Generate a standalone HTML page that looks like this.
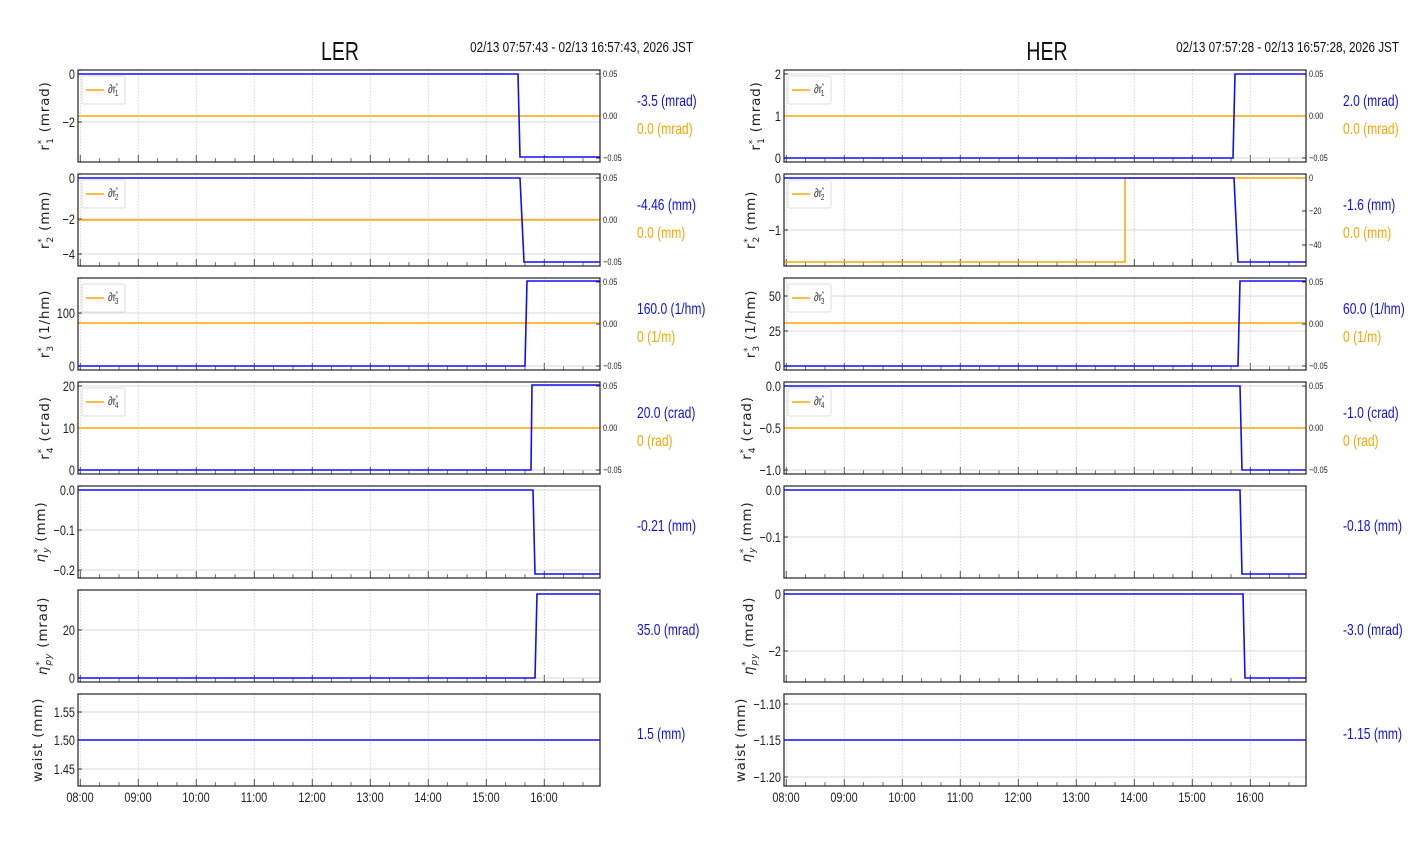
<!DOCTYPE html>
<html><head><meta charset="utf-8"><style>
html,body{margin:0;padding:0;background:#fff;width:1412px;height:864px;overflow:hidden}
svg text{font-family:"Liberation Sans",sans-serif}
</style></head><body>
<svg id="s" width="1412" height="864" xmlns="http://www.w3.org/2000/svg"></svg>
<script>
const S=document.getElementById('s');let h='';
const B='#1010ee',O='#ffa500';
function txt(x,y,t,o){o=o||{};const k=o.k||0.78;h+=`<text x="0" y="0" font-size="${o.fs||11}" fill="${o.c||'#222'}" text-anchor="${o.a||'start'}" transform="translate(${x} ${y}) scale(${k} 1)">${t}</text>`;}
function panel(x0,x1,top,p){
 const bot=top+92;
 for(let i=0;i<9;i++){const x=x0+2.3+58*i;h+=`<line x1="${x}" y1="${top}" x2="${x}" y2="${bot}" stroke="#ccc" stroke-dasharray="1.5,1.5" stroke-width="0.8"/>`;}
 for(let i=-1;i<28;i++){const x=x0+2.3+58/3*i;if(x<x0||x>x1)continue;const maj=i%3==0;h+=`<line x1="${x}" y1="${bot}" x2="${x}" y2="${bot-(maj?7:4)}" stroke="#555" stroke-width="${maj?1:0.8}"/>`;}
 p.yt.forEach(([v,y])=>{h+=`<line x1="${x0}" y1="${y}" x2="${x1}" y2="${y}" stroke="#ccc" stroke-width="0.8"/><line x1="${x0}" y1="${y}" x2="${x0+4}" y2="${y}" stroke="#333"/>`;txt(x0-3,y+5,v,{a:'end',fs:14});});
 if(p.rt){p.rt.forEach(([v,y])=>{h+=`<line x1="${x1-4}" y1="${y}" x2="${x1}" y2="${y}" stroke="#333"/>`;txt(x1+3,y+3,v,{fs:9.5});});}
 if(p.or)h+=`<polyline points="${p.or}" fill="none" stroke="${O}" stroke-width="1.5"/>`;
 h+=`<polyline points="${p.bl}" fill="none" stroke="${B}" stroke-width="1.6"/>`;
 h+=`<rect x="${x0}" y="${top}" width="${x1-x0}" height="92" fill="none" stroke="#222" stroke-width="1.2"/>`;
 if(p.leg){h+=`<rect x="${x0+4}" y="${top+6}" width="43" height="28" rx="2" fill="#fff" stroke="#ddd"/><line x1="${x0+8}" y1="${top+20}" x2="${x0+26}" y2="${top+20}" stroke="${O}" stroke-width="1.5"/>`;
  h+=`<text x="0" y="0" font-size="12" fill="#333" transform="translate(${x0+30} ${top+23}) scale(0.8 1)">∂r<tspan font-size="7" dy="-5">*</tspan><tspan font-size="8" dx="-4" dy="8">${p.leg}</tspan></text>`;}
 const lx=x0-(p.lo||29),ly=top+46;
 h+=`<text x="${lx}" y="${ly}" font-size="13.5" fill="#222" text-anchor="middle" letter-spacing="0.8" transform="rotate(-90 ${lx} ${ly})" style="font-family:'DejaVu Sans',sans-serif">${p.yl}</text>`;
 p.vt.forEach(([t,c,dy])=>txt(x1+37,top+dy,t,{c:c,fs:15.5}));
}
function yl(n,u){return `r<tspan font-size="9" dy="-5">*</tspan><tspan font-size="9" dx="-5" dy="9">${n}</tspan><tspan dy="-4"> (${u})</tspan>`;}
function eta(sub,u){return `<tspan font-style="italic">η</tspan><tspan font-size="9" dy="-5">*</tspan><tspan font-size="9" font-style="italic" dx="-5" dy="9">${sub}</tspan><tspan dy="-4"> (${u})</tspan>`;}
const rt=[['0.05',74],['0.00',116],['−0.05',158]];
function rtt(off){return rt.map(([v,y])=>[v,y+off]);}
const tops=[70,174,278,382,486,590,694];
const L=[78,600];
const LP=[
 {yt:[['0',74],['−2',122]],rt:rtt(0),or:`78,116 600,116`,bl:`78,74 518,74 520,157 600,157`,leg:'1',yl:yl(1,'mrad'),vt:[['-3.5 (mrad)',B,36],['0.0 (mrad)',O,64]]},
 {yt:[['0',178],['−2',219],['−4',254]],rt:rtt(104),or:`78,220 600,220`,bl:`78,178 520,178 524,262 600,262`,leg:'2',yl:yl(2,'mm'),vt:[['-4.46 (mm)',B,36],['0.0 (mm)',O,64]]},
 {yt:[['0',366],['100',313]],rt:rtt(208),or:`78,323 600,323`,bl:`78,366 525,366 527,281 600,281`,leg:'3',yl:yl(3,'1/hm'),vt:[['160.0 (1/hm)',B,36],['0 (1/m)',O,64]]},
 {yt:[['0',470],['10',428],['20',386]],rt:rtt(312),or:`78,428 600,428`,bl:`78,470 531,470 532,385 600,385`,leg:'4',yl:yl(4,'crad'),vt:[['20.0 (crad)',B,36],['0 (rad)',O,64]]},
 {yt:[['0.0',490],['−0.1',530],['−0.2',570]],bl:`78,490 533,490 535,574 600,574`,yl:eta('y','mm'),lo:33,vt:[['-0.21 (mm)',B,45]]},
 {yt:[['0',678],['20',630]],bl:`78,678 535,678 537,594 600,594`,yl:eta('py','mrad'),lo:31,vt:[['35.0 (mrad)',B,45]]},
 {yt:[['1.55',712],['1.50',740],['1.45',769]],bl:`78,740 600,740`,yl:'waist (mm)',lo:36,vt:[['1.5 (mm)',B,45]]},
];
const H=[784,1306];
const HP=[
 {yt:[['2',74],['1',116],['0',158]],rt:rtt(0),or:`784,116 1306,116`,bl:`784,158 1233,158 1235,74 1306,74`,leg:'1',yl:yl(1,'mrad'),lo:24,vt:[['2.0 (mrad)',B,36],['0.0 (mrad)',O,64]]},
 {yt:[['0',178],['−1',230]],rt:[['0',178],['−20',211],['−40',245]],or:`784,262 1125,262 1125,178 1306,178`,bl:`784,178 1234,178 1238,262 1306,262`,leg:'2',yl:yl(2,'mm'),vt:[['-1.6 (mm)',B,36],['0.0 (mm)',O,64]]},
 {yt:[['50',296],['25',331],['0',366]],rt:rtt(208),or:`784,323 1306,323`,bl:`784,366 1238,366 1240,281 1306,281`,leg:'3',yl:yl(3,'1/hm'),vt:[['60.0 (1/hm)',B,36],['0 (1/m)',O,64]]},
 {yt:[['0.0',386],['−0.5',428],['−1.0',470]],rt:rtt(312),or:`784,428 1306,428`,bl:`784,386 1240,386 1242,470 1306,470`,leg:'4',yl:yl(4,'crad'),lo:33,vt:[['-1.0 (crad)',B,36],['0 (rad)',O,64]]},
 {yt:[['0.0',490],['−0.1',537]],bl:`784,490 1240,490 1242,574 1306,574`,yl:eta('y','mm'),lo:33,vt:[['-0.18 (mm)',B,45]]},
 {yt:[['0',594],['−2',651]],bl:`784,594 1243,594 1245,678 1306,678`,yl:eta('py','mrad'),lo:31,vt:[['-3.0 (mrad)',B,45]]},
 {yt:[['−1.10',704],['−1.15',740],['−1.20',777]],bl:`784,740 1306,740`,yl:'waist (mm)',lo:39,vt:[['-1.15 (mm)',B,45]]},
];
LP.forEach((p,i)=>panel(L[0],L[1],tops[i],p));
HP.forEach((p,i)=>panel(H[0],H[1],tops[i],p));
for(let i=0;i<9;i++){const t=String(8+i).padStart(2,'0')+':00';txt(80+58*i,802,t,{a:'middle',fs:14});txt(786+58*i,802,t,{a:'middle',fs:14});}
txt(340,60,'LER',{a:'middle',fs:26,c:'#111',k:0.75});
txt(1047,60,'HER',{a:'middle',fs:26,c:'#111',k:0.75});
txt(693,52,'02/13 07:57:43 - 02/13 16:57:43, 2026 JST',{a:'end',fs:15,c:'#111',k:0.78});
txt(1399,52,'02/13 07:57:28 - 02/13 16:57:28, 2026 JST',{a:'end',fs:15,c:'#111',k:0.78});
S.innerHTML=h;
</script>
</body></html>
